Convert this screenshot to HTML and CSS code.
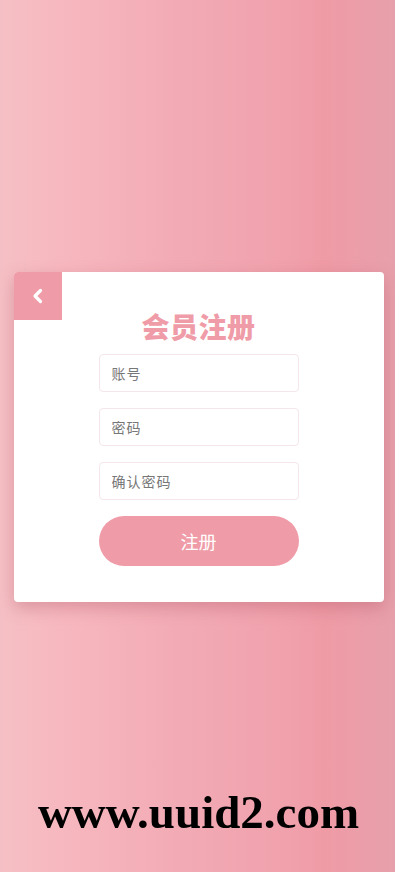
FILE: index.html
```html
<!DOCTYPE html>
<html lang="zh">
<head>
<meta charset="utf-8">
<link rel="stylesheet" href="styles.css">
</head>
<body>
<div class="page">
  <div class="card">
    <a class="back" href="#">
      <svg width="14" height="16" viewBox="0 0 14 16"><path d="M9.5 2.5 L4 8 L9.5 13.5" fill="none" stroke="#fff" stroke-width="3.2" stroke-linecap="round" stroke-linejoin="round"/></svg>
    </a>
    <h1 class="title">会员注册</h1>
    <form class="form">
      <input class="field" type="text" placeholder="账号">
      <input class="field" type="password" placeholder="密码">
      <input class="field" type="password" placeholder="确认密码">
      <button class="submit" type="button">注册</button>
    </form>
  </div>
</div>
<div class="watermark">www.uuid2.com</div>
</body>
</html>
```
FILE: styles.css
```css
html, body {
  margin: 0;
  padding: 0;
  height: 100%;
}
body {
  font-family: "Noto Sans CJK SC", "Noto Sans", sans-serif;
  background: linear-gradient(to right, #f5c0c5 0%, #f7b7be 17%, #f2abb5 45%, #f0a0ab 75%, #ef9ba6 82%, #e7a0ab 100%);
}
.page {
  height: 100vh;
  box-sizing: border-box;
  padding: 2px 0 0 2px;
  display: flex;
  align-items: center;
  justify-content: center;
}
.card {
  position: relative;
  width: 370px;
  height: 330px;
  box-sizing: border-box;
  background: #fff;
  border-radius: 4px;
  box-shadow: 0 6px 16px rgba(170, 80, 95, 0.35);
  display: flex;
  flex-direction: column;
  align-items: center;
  padding-top: 36px;
}
.back {
  position: absolute;
  left: 0;
  top: 0;
  width: 48px;
  height: 48px;
  background: #ef9ca8;
  display: flex;
  align-items: center;
  justify-content: center;
  border-top-left-radius: 4px;
}
.title {
  margin: 0;
  font-size: 28px;
  line-height: 36px;
  font-weight: 900;
  color: #ef9ca8;
  letter-spacing: 0.5px;
}
.form {
  margin-top: 10px;
  width: 200px;
  display: flex;
  flex-direction: column;
  gap: 16px;
}
.field {
  width: 200px;
  height: 38px;
  box-sizing: border-box;
  border: 1px solid #f4e6ea;
  border-radius: 4px;
  padding: 0 12px;
  font-family: "Noto Sans CJK SC", sans-serif;
  font-size: 14px;
  color: #555;
  outline: none;
  letter-spacing: 1px;
}
.field::placeholder {
  color: #777;
}
.submit {
  height: 50px;
  border: none;
  border-radius: 25px;
  background: #ef9ca8;
  color: #fff;
  font-family: "Noto Sans CJK SC", sans-serif;
  font-size: 18px;
  padding: 0;
}
.watermark {
  position: fixed;
  left: 0;
  right: 0;
  top: 785px;
  padding-left: 2px;
  text-align: center;
  font-family: "Liberation Serif", serif;
  font-weight: bold;
  font-size: 47px;
  line-height: 54px;
  color: #000;
}
```
